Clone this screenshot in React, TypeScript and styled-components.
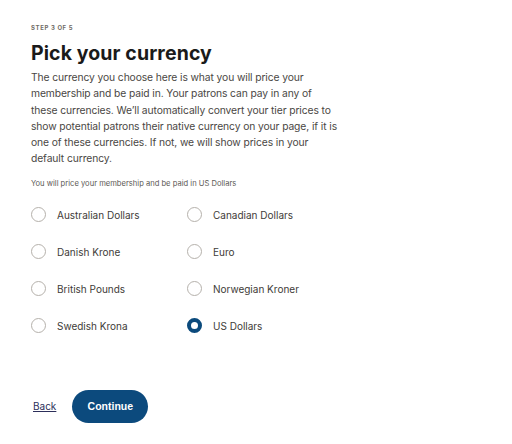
import React, { useState } from 'react';
import styled, { createGlobalStyle } from 'styled-components';

const GlobalStyle = createGlobalStyle`
  body {
    margin: 0;
    background: #fff;
    font-family: Inter, "Liberation Sans", sans-serif;
  }
`;

const Page = styled.div`
  width: 512px;
  height: 444px;
  box-sizing: border-box;
  padding: 24px 31px 0;
`;

const Step = styled.div`
  font-size: 6px;
  font-weight: 700;
  letter-spacing: 0.6px;
  color: #706c66;
  text-transform: uppercase;
  line-height: 8px;
`;

const Title = styled.h1`
  margin: 9px 0 0;
  font-size: 19.5px;
  font-weight: 700;
  color: #1a1a1a;
  line-height: 24px;
  letter-spacing: 0.1px;
`;

const Intro = styled.p`
  margin: 4px 0 0;
  width: 306px;
  font-size: 10.3px;
  letter-spacing: -0.1px;
  line-height: 16.3px;
  color: #4a4744;
`;

const Note = styled.p`
  margin: 12px 0 0;
  font-size: 7.6px;
  color: #5c5955;
`;

const Options = styled.div`
  margin-top: 19px;
  display: grid;
  grid-template-columns: 156px 156px;
  row-gap: 21px;
`;

const Option = styled.label`
  display: flex;
  align-items: center;
  gap: 11px;
  height: 16px;
  cursor: pointer;
  font-size: 10px;
  color: #3e3b38;
`;

const Radio = styled.span<{ $checked: boolean }>`
  width: 15px;
  height: 15px;
  box-sizing: border-box;
  border-radius: 50%;
  border: ${p => (p.$checked ? '4.5px solid #0b4a7c' : '1.2px solid #b5b1ab')};
  background: #fff;
  flex-shrink: 0;
`;

const Actions = styled.div`
  margin-top: 56px;
  display: flex;
  align-items: center;
  gap: 16px;
  padding-left: 2px;
`;

const BackLink = styled.a`
  font-size: 10px;
  color: #2c2e5a;
  text-decoration: underline;
  cursor: pointer;
`;

const ContinueButton = styled.button`
  width: 76px;
  height: 33px;
  border: none;
  border-radius: 17px;
  background: #0c4a7d;
  color: #fff;
  font-family: "Liberation Sans", Arial, sans-serif;
  font-weight: 700;
  font-size: 10.5px;
  cursor: pointer;
`;

const currencies = [
  'Australian Dollars',
  'Canadian Dollars',
  'Danish Krone',
  'Euro',
  'British Pounds',
  'Norwegian Kroner',
  'Swedish Krona',
  'US Dollars',
];

export default function App() {
  const [selected, setSelected] = useState('US Dollars');

  return (
    <Page>
      <GlobalStyle />
      <Step>Step 3 of 5</Step>
      <Title>Pick your currency</Title>
      <Intro>
        The currency you choose here is what you will price your membership and be paid in. Your
        patrons can pay in any of these currencies. We&rsquo;ll automatically convert your tier
        prices to show potential patrons their native currency on your page, if it is one of these
        currencies. If not, we will show prices in your default currency.
      </Intro>
      <Note>You will price your membership and be paid in {selected}</Note>
      <Options>
        {currencies.map(c => (
          <Option key={c} onClick={() => setSelected(c)}>
            <Radio $checked={selected === c} />
            {c}
          </Option>
        ))}
      </Options>
      <Actions>
        <BackLink>Back</BackLink>
        <ContinueButton>Continue</ContinueButton>
      </Actions>
    </Page>
  );
}
